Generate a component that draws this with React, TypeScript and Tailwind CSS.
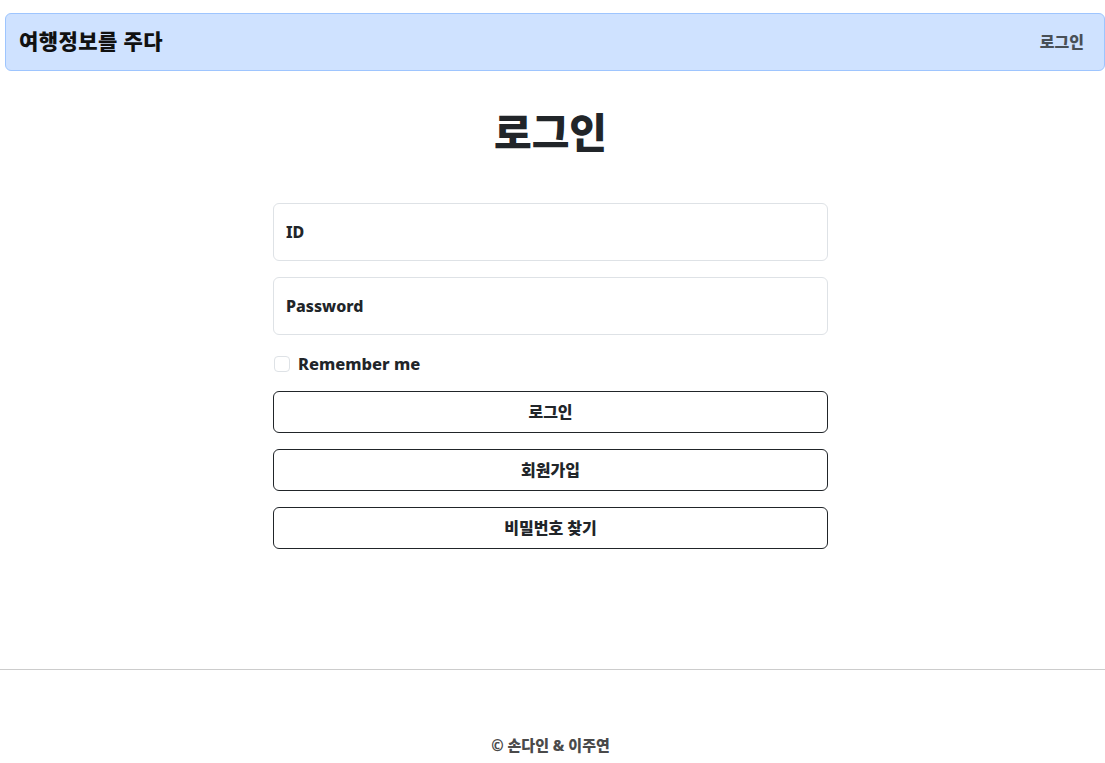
import React from "react";

const font = { fontFamily: '"Noto Sans", "Noto Sans CJK KR", sans-serif' };

export default function App() {
  return (
    <div className="min-h-[763px] bg-white text-[#212529] flex flex-col" style={font}>
      <header className="mt-[13px] ml-[5px] h-[58px] rounded-[6px] border border-[#9ec5fe] bg-[#cfe2ff] flex items-center justify-between pl-[13px] pr-[20px]">
        <span className="text-[21px] font-black tracking-[0.4px] text-[#111]">여행정보를 주다</span>
        <span className="text-[16px] font-extrabold text-[#495057]">로그인</span>
      </header>

      <main className="flex flex-col items-center pr-[4px]">
        <h1 className="mt-[34px] text-[41px] leading-[54px] font-black text-[#212529]">로그인</h1>
        <form className="mt-[44px] w-[555px] flex flex-col">
          <div className="h-[58px] rounded-[6px] border border-[#dee2e6] flex items-center px-[12px] text-[16px] font-extrabold">ID</div>
          <div className="mt-[16px] h-[58px] rounded-[6px] border border-[#dee2e6] flex items-center px-[12px] text-[16px] font-extrabold">Password</div>
          <label className="mt-[19px] flex items-center gap-[8px] text-[16.5px] font-extrabold leading-[20px]">
            <span className="ml-[1px] w-[16px] h-[16px] rounded-[4px] border border-[#dee2e6] bg-white" />
            Remember me
          </label>
          <button type="button" className="mt-[17px] h-[42px] rounded-[6px] border border-[#212529] bg-white text-[16px] font-extrabold">로그인</button>
          <button type="button" className="mt-[16px] h-[42px] rounded-[6px] border border-[#212529] bg-white text-[16px] font-extrabold">회원가입</button>
          <button type="button" className="mt-[16px] h-[42px] rounded-[6px] border border-[#212529] bg-white text-[16px] font-extrabold">비밀번호 찾기</button>
        </form>
      </main>

      <footer className="mt-[120px] border-t border-[#cccccc] flex justify-center pt-[64px] pr-[4px]">
        <span className="text-[15px] font-extrabold text-[#4a4a4a]">© 손다인 &amp; 이주연</span>
      </footer>
    </div>
  );
}
